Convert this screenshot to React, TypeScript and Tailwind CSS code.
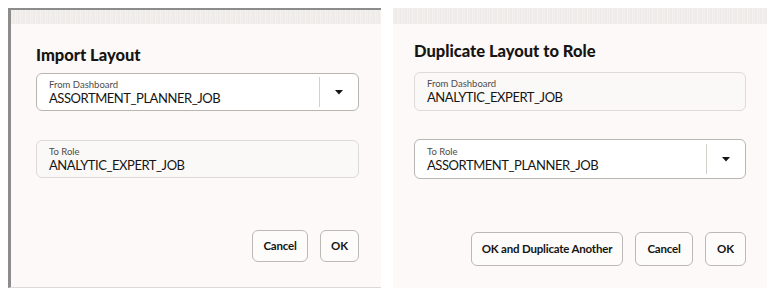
const strip =
  "bg-[repeating-linear-gradient(90deg,#e9e6e3_0px,#f4f2f0_1px,#ebe8e5_3px,#f7f5f3_5px)]";

function Field({
  label,
  value,
  select,
  white,
  h,
}: {
  label: string;
  value: string;
  select?: boolean;
  white?: boolean;
  h: string;
}) {
  return (
    <div
      className={`flex items-stretch rounded-[6px] border ${h} ${
        white ? "bg-white border-[#b9b5b1]" : "bg-[#fbf9f8] border-[#dedad7]"
      }`}
    >
      <div className="flex flex-1 flex-col justify-center pl-[12px]">
        <div className="text-[9.5px] leading-[11px] text-[#4f4b47]">{label}</div>
        <div className="text-[13px] leading-[16px] tracking-[-0.45px] text-[#161513]">{value}</div>
      </div>
      {select && (
        <div className="flex w-[39px] items-center">
          <div className="h-[30px] w-px bg-[#d3cfcb]" />
          <svg width="38" height="8" viewBox="0 0 38 8">
            <path d="M15 2 L23 2 L19 6.5 Z" fill="#161513" />
          </svg>
        </div>
      )}
    </div>
  );
}

function Btn({ children, w, h }: { children: string; w: string; h: string }) {
  return (
    <button
      className={`${w} ${h} rounded-[6px] border border-[#bcb8b4] bg-[#fdfcfb] text-[11.5px] font-bold tracking-[-0.2px] text-[#161513]`}
    >
      {children}
    </button>
  );
}

export default function App() {
  return (
    <div
      className="flex h-[299px] w-[774px] bg-white pt-[8px]"
      style={{ fontFamily: "Lato, 'Open Sans', sans-serif" }}
    >
      <div className="ml-[8px] flex h-[280px] w-[373px] flex-col border-l-[3px] border-t-[2px] border-b border-l-[#8c8c8c] border-t-[#8c8c8c] border-b-[#dcdad8] bg-[#fcf9f8]">
        <div className={`h-[14px] ${strip}`} />
        <div className="flex flex-col pl-[25px] pr-[22px]">
          <h1 className="mt-[20px] text-[16.5px] font-black leading-[22px] text-[#161513]">
            Import Layout
          </h1>
          <div className="mt-[7px]">
            <Field label="From Dashboard" value="ASSORTMENT_PLANNER_JOB" select white h="h-[38px]" />
          </div>
          <div className="mt-[29px]">
            <Field label="To Role" value="ANALYTIC_EXPERT_JOB" h="h-[38px]" />
          </div>
          <div className="mt-[52px] flex justify-end gap-[12px]">
            <Btn w="w-[56px]" h="h-[32px]">Cancel</Btn>
            <Btn w="w-[39px]" h="h-[32px]">OK</Btn>
          </div>
        </div>
      </div>

      <div className="ml-[12px] flex h-[280px] w-[374px] flex-col bg-[#fcf9f8]">
        <div className={`h-[16px] ${strip}`} />
        <div className="flex flex-col px-[21px]">
          <h1 className="mt-[16px] text-[16.5px] font-black leading-[22px] text-[#161513]">
            Duplicate Layout to Role
          </h1>
          <div className="mt-[10px]">
            <Field label="From Dashboard" value="ANALYTIC_EXPERT_JOB" h="h-[39px]" />
          </div>
          <div className="mt-[28px]">
            <Field label="To Role" value="ASSORTMENT_PLANNER_JOB" select white h="h-[40px]" />
          </div>
          <div className="mt-[53px] flex justify-end gap-[12px]">
            <Btn w="w-[152px]" h="h-[34px]">OK and Duplicate Another</Btn>
            <Btn w="w-[58px]" h="h-[34px]">Cancel</Btn>
            <Btn w="w-[41px]" h="h-[34px]">OK</Btn>
          </div>
        </div>
      </div>
    </div>
  );
}
